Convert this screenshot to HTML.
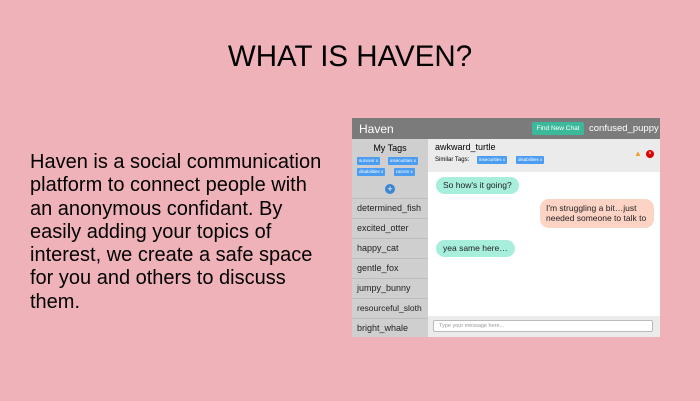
<!DOCTYPE html>
<html><head><style>
*{margin:0;padding:0;box-sizing:border-box}
body{width:700px;height:401px;background:#efb2b9;font-family:"Liberation Sans",sans-serif;position:relative;overflow:hidden}
.t{position:absolute;top:40px;left:0;width:700px;text-align:center;font-size:29.5px;color:#000}
.p{position:absolute;left:30px;top:151px;white-space:nowrap;font-size:20px;line-height:23.3px;color:#000}
.app{position:absolute;left:352px;top:118px;width:308px;height:219px;background:#fff;overflow:hidden}
.hd{position:absolute;left:0;top:0;width:308px;height:21px;background:#7b7b7b;color:#fff}
.hd .n{position:absolute;left:7px;top:4px;font-size:12px}
.fn{position:absolute;left:180px;top:4px;width:52px;height:13px;background:#3cb89a;border-radius:2px;font-size:6.5px;text-align:center;line-height:13px}
.un{position:absolute;left:237px;top:5px;font-size:9.5px}
.sb{position:absolute;left:0;top:21px;width:76px;height:198px;background:#cfcfcf}
.mt{position:absolute;top:4px;width:76px;text-align:center;font-size:9px}
.tag{position:absolute;height:8px;background:#4a9df0;color:#fff;font-size:4.5px;line-height:8px;padding:0 2px;border-radius:1px;white-space:nowrap}
.plus{position:absolute;left:33px;top:45px;width:10px;height:10px;border-radius:50%;background:#3b86cf;color:#fff;font-size:9px;line-height:10px;text-align:center}
.it{position:absolute;left:0;width:76px;height:20px;border-top:1px solid #bdbdbd;font-size:9px;line-height:19px;padding-left:5px;color:#222;white-space:nowrap}
.ch{position:absolute;left:76px;top:21px;width:232px;height:33px;background:#ebebeb}
.b{position:absolute;border-radius:9px;font-size:8.5px;color:#222;padding:0 7px;white-space:nowrap}
.in{position:absolute;left:76px;top:198px;width:232px;height:21px;background:#ebebeb}
.in div{position:absolute;left:5px;top:4px;width:220px;height:12px;background:#fff;border:1px solid #bbb;border-radius:2px;font-size:5.5px;color:#999;line-height:10px;padding-left:5px}
</style></head><body>
<div class="t">WHAT IS HAVEN?</div>
<div class="p">Haven is a social communication<br>platform to connect people with<br>an anonymous confidant. By<br>easily adding your topics of<br>interest, we create a safe space<br>for you and others to discuss<br>them.</div>
<div class="app">
<div class="hd"><span class="n">Haven</span><div class="fn">Find New Chat</div><span class="un">confused_puppy</span></div>
<div class="sb">
<div class="mt">My Tags</div>
<div class="tag" style="left:5px;top:18px">survivor x</div>
<div class="tag" style="left:36px;top:18px">insecurities x</div>
<div class="tag" style="left:5px;top:29px">disabilities x</div>
<div class="tag" style="left:42px;top:29px">racism x</div>
<div class="plus">+</div>
<div class="it" style="top:59px">determined_fish</div>
<div class="it" style="top:79px">excited_otter</div>
<div class="it" style="top:99px">happy_cat</div>
<div class="it" style="top:119px">gentle_fox</div>
<div class="it" style="top:139px">jumpy_bunny</div>
<div class="it" style="top:159px;font-size:8.5px">resourceful_sloth</div>
<div class="it" style="top:179px">bright_whale</div>
</div>
<div class="ch">
<div style="position:absolute;left:7px;top:3px;font-size:9px">awkward_turtle</div>
<div style="position:absolute;left:7px;top:18px;font-size:6px">Similar Tags:</div>
<div class="tag" style="left:49px;top:17px">insecurities x</div>
<div class="tag" style="left:88px;top:17px">disabilities x</div>
<div style="position:absolute;left:206px;top:10px;font-size:8px;color:#f0a020">▲</div>
<div style="position:absolute;left:218px;top:11px;width:8px;height:8px;border-radius:50%;background:#d00;color:#fff;font-size:6px;line-height:8px;text-align:center">×</div>
</div>
<div class="b" style="left:84px;top:59px;height:17px;line-height:17px;background:#a7eedc">So how's it going?</div>
<div class="b" style="left:188px;top:81px;width:114px;height:29px;padding:4px 6px 0;line-height:10px;background:#fdd3c5;white-space:normal">I'm struggling a bit…just needed someone to talk to</div>
<div class="b" style="left:84px;top:122px;height:17px;line-height:17px;background:#a7eedc">yea same here…</div>
<div class="in"><div>Type your message here...</div></div>
</div>
</body></html>
